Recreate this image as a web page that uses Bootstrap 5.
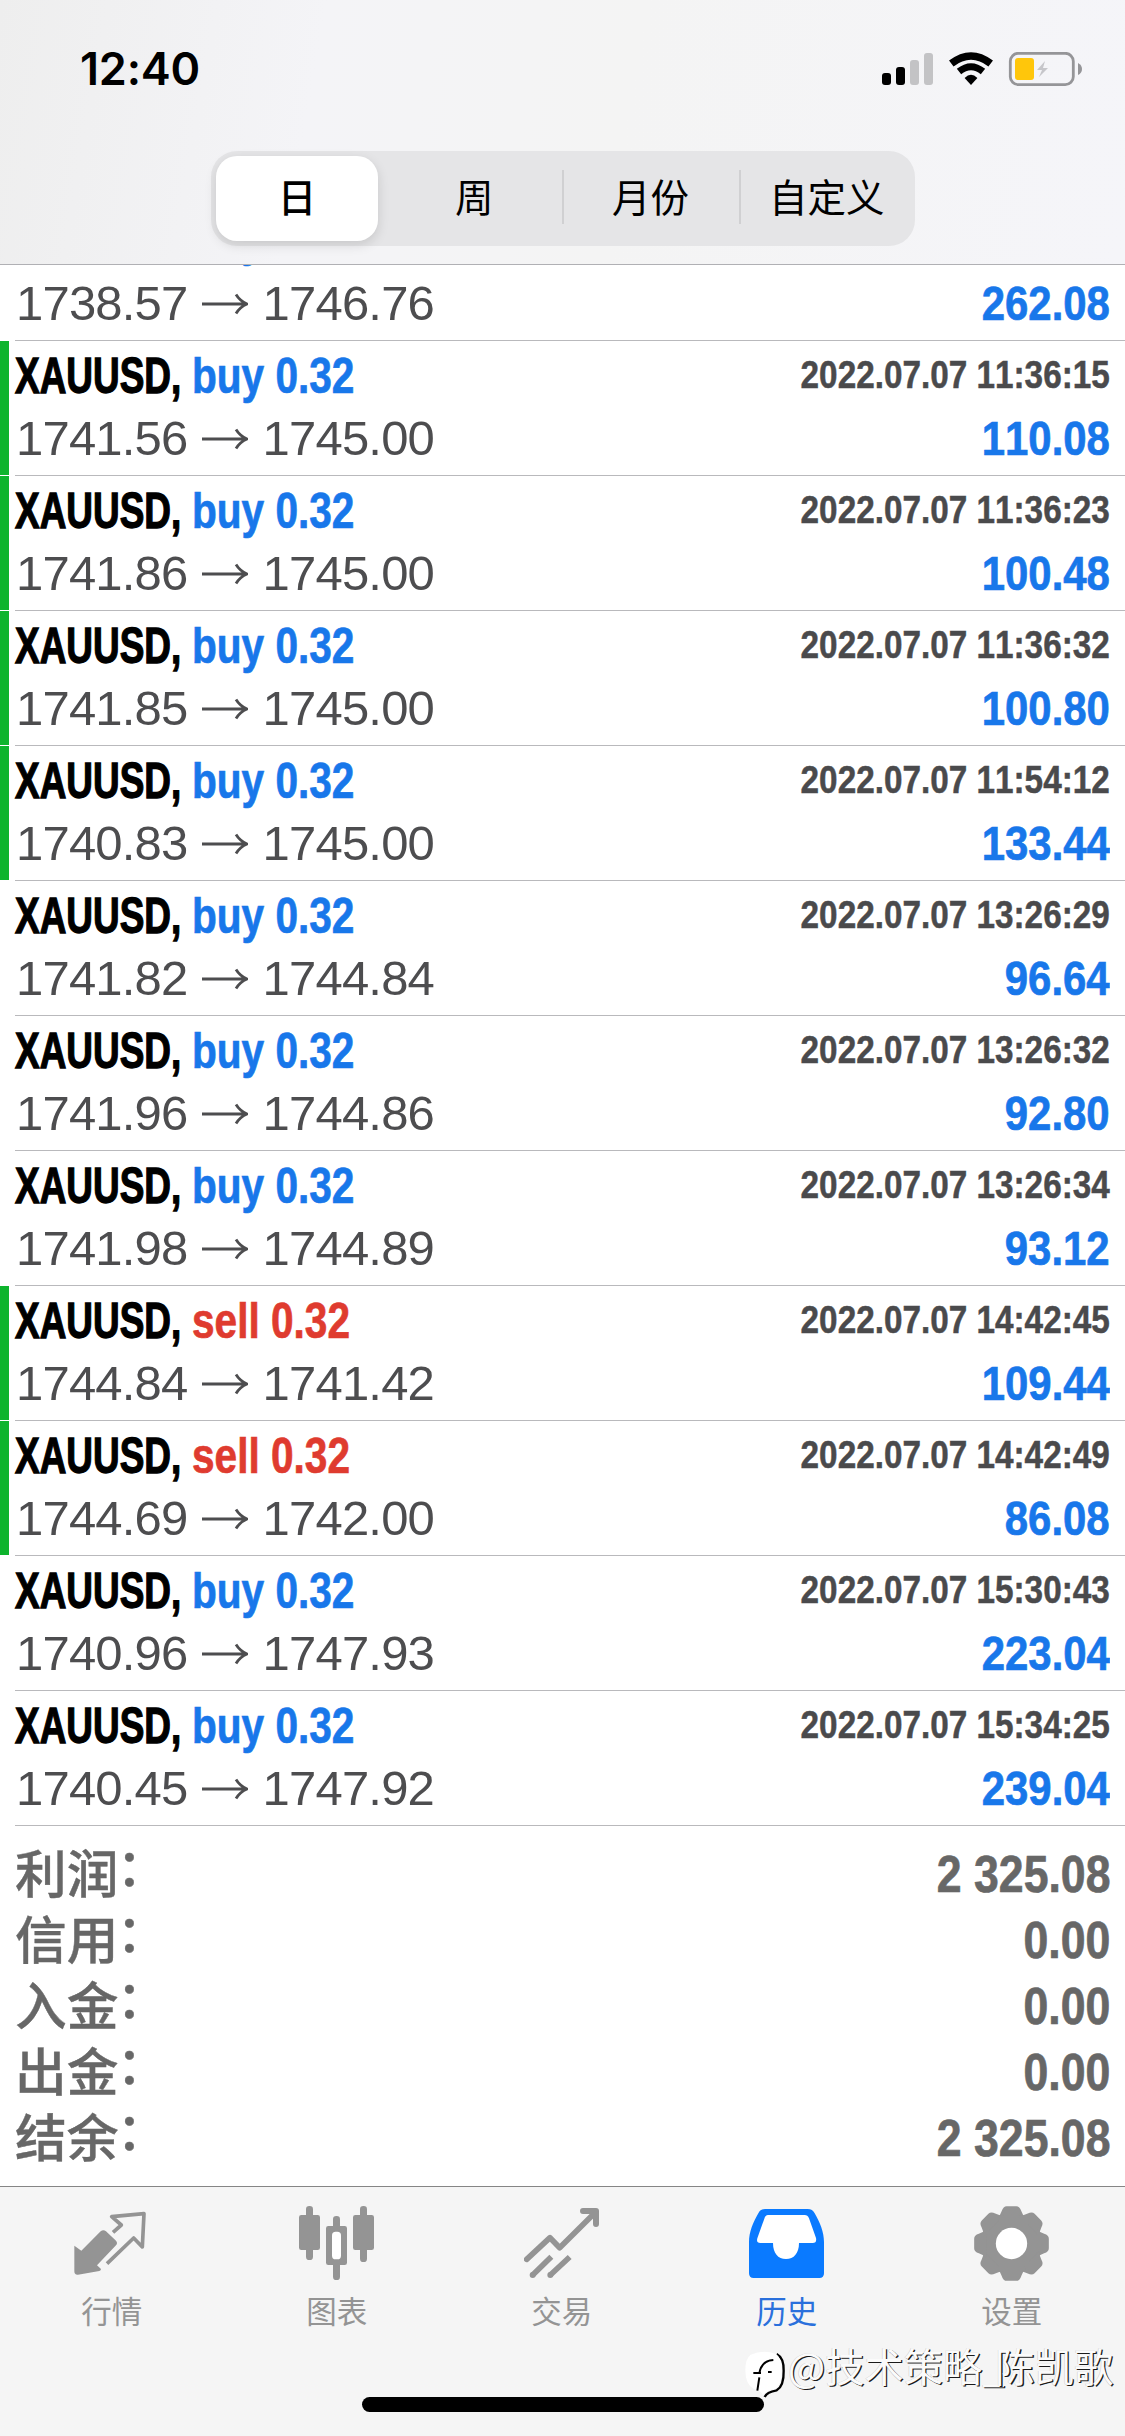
<!DOCTYPE html>
<html lang="zh-CN">
<head>
<meta charset="utf-8">
<meta name="viewport" content="width=device-width, initial-scale=1">
<title>历史</title>
<link href="https://cdn.jsdelivr.net/npm/bootstrap@5.3.0/dist/css/bootstrap.min.css" rel="stylesheet">
<style>
body{width:1125px;height:2436px;overflow:hidden;background:#fff;font-family:"Liberation Sans","Noto Sans CJK SC",sans-serif;font-kerning:none}
.top-area{height:264px;z-index:2;background:linear-gradient(100deg,#eee 0,#f4f4f7 28%,#f4f4f4 55%,#f5f5f9 100%)}
.top-area::after{content:"";position:absolute;left:0;right:0;bottom:-1px;height:1px;background:#b0b0b4}
.status-row{height:151px;padding:52px 43px 0 80px}
.clock{font:600 45px/34px Inter,sans-serif;letter-spacing:-.2px}
.segments{width:704px;height:95px;padding:5px 0 5px 5px;border-radius:26px;background:#e5e5e7;margin-left:211px;font-family:"Noto Sans CJK SC",sans-serif;font-size:38.5px;line-height:79px;color:#000}
.segments>div{flex:1 1 0;text-align:center;position:relative}
.segments .chosen{background:#fff;border-radius:21px;height:85px;flex:0 0 162px;margin-right:8px;font-weight:500;box-shadow:0 4px 12px rgba(0,0,0,.13)}
.segments .divided::before{content:"";position:absolute;left:0;top:14px;width:2px;height:54px;background:#d0d0d2}
.deals{height:1561px;display:flex;flex-direction:column;justify-content:flex-end;overflow:hidden;margin-top:1px}
.deal{height:135px;flex:none;padding-right:15px;line-height:63px;position:relative;border-left:9px solid transparent;background:#fff;background-clip:padding-box}
.deal.closed-tp{border-left-color:#0eb42d}
.deal::after{content:"";position:absolute;left:6px;right:0;bottom:0;height:1px;background:#b9b9bc}
.deal::before{content:"";position:absolute;left:-9px;width:9px;bottom:0;height:1px;background:#fff}
.upper,.lower{padding-left:6px;height:63px}
.upper{height:66px;padding-top:3px}
.deal:first-child .upper{padding-top:1px}
.sym,.side,.stamp,.gain,.sum{display:block;white-space:nowrap;font-weight:700;transform-origin:0 50%;-webkit-text-stroke:.7px currentColor}
.sym{width:176.5px;font-size:49.5px;color:#000;transform:scaleX(.746);-webkit-text-stroke-width:1.3px}
.side{font-size:49.5px;transform:scaleX(.82)}
.is-buy,.gain{color:#1877ea}
.is-sell{color:#df3b2f}
.stamp,.gain,.sum{margin-left:auto;transform-origin:100% 50%}
.stamp{font-size:39.5px;color:#4a4a4c;transform:scaleX(.843);line-height:61px;-webkit-text-stroke-width:.5px}
.gain{font-size:49px;transform:scaleX(.855)}
.quote-pair{font-size:49px;color:#4d4d4f;letter-spacing:-.8px;padding-left:1px}
.quote-pair svg{width:46px;height:22px;margin:0 15px 0 14px}
.totals{height:360px;padding:15px 15px 0;color:#676767}
.total-line{height:66px;line-height:66px}
.total-line b{font:500 51.7px/60px "Noto Sans CJK SC",sans-serif;-webkit-text-stroke:.4px currentColor}
.total-line b i{display:inline-block;font-style:normal;transform:translate(-2px,-7px)}
.sum{font-size:51.5px;transform:scaleX(.866)}
.tabs-area{height:250px;background:#f5f5f5;border-top:1px solid #858585;color:#949494;position:relative}
.tab-item{width:225px;padding:19px 1.5px 0 0}
.tab-item svg{width:75px;height:75px}
.tab-item span{font:400 30.5px/44px "Noto Sans CJK SC",sans-serif;margin-top:7px}
.tab-item.current{color:#0a7aff}
.tab-item.current span{color:#2a70dc}
.home-bar{position:absolute;left:362px;top:210px;width:402px;height:15px;border-radius:8px;background:#000}
.author-mark{position:absolute;left:744px;top:163px;height:48px}
.author-mark span{font:400 39.3px/46px "Noto Sans CJK SC",sans-serif;color:#fbfbfb;text-shadow:1.3px 1.3px 0 #1a1a1a,-.4px -.4px 0 #ccc;white-space:nowrap;margin:0 0 18px 1px}
.author-mark i{font-style:normal;letter-spacing:-9px}
</style>
</head>
<body>
<header class="top-area position-relative">
  <div class="status-row d-flex justify-content-between align-items-start">
    <div class="clock text-black">12:40</div>
    <svg width="202" height="36" viewBox="880 52 202 36">
      <rect x="882" y="73" width="9" height="12" rx="3"/><rect x="896" y="67" width="9" height="18" rx="3"/>
      <rect x="910" y="60" width="9" height="25" rx="3" fill="#c3c3c5"/><rect x="924" y="53" width="9" height="32" rx="3" fill="#c3c3c5"/>
      <g fill="none" stroke="#000" stroke-width="7.500"><path d="M951.300 63.500Q971 48.500 990.700 63.500"/><path d="M959 71.500Q971 62 983 71.500" stroke-width="7"/></g>
      <path d="M964.600 78Q971 71.500 977.400 78L971 85Z"/>
      <rect x="1010.300" y="53.300" width="63" height="31.400" rx="8" fill="none" stroke="#959598" stroke-width="2.800"/>
      <rect x="1015" y="58" width="19" height="22" rx="3" fill="#ffc60b"/>
      <path d="M1045 61L1037 70H1042L1039 77L1048 68H1043Z" fill="#c6c6ca"/>
      <path d="M1078 63Q1082 65 1082 69T1078 75Z" fill="#959598"/>
    </svg>
  </div>
  <div class="segments d-flex">
    <div class="chosen">日</div><div>周</div><div class="divided">月份</div><div class="divided">自定义</div>
  </div>
</header>

<main>
  <section class="deals" id="deals"></section>
  <section class="totals" id="totals"></section>
</main>

<footer class="tabs-area">
  <nav class="d-flex">
    <div class="tab-item d-flex flex-column align-items-center">
      <svg viewBox="0 0 225 225" fill="currentColor"><path d="M1 119L22 134L80 76Q88 69 96 76L126 104Q132 111 126 118L69 178L81 189Q81 193 76 195L12 206Q1 207 1 196Z"/><path d="M117 79L142 57L113 32L210 23L205 123L179 96L99 173" fill="none" stroke="currentColor" stroke-width="11" stroke-linejoin="round"/></svg>
      <span>行情</span></div>
    <div class="tab-item d-flex flex-column align-items-center">
      <svg viewBox="0 0 225 225" fill="currentColor"><rect y="27" width="63" height="105" rx="7"/><rect x="21" width="21" height="162" rx="10"/><rect x="81" y="60" width="63" height="117" rx="7"/><rect x="102" y="30" width="21" height="192" rx="10"/><rect x="99" y="77" width="27" height="83" rx="11" fill="#fff"/><rect x="162" y="27" width="63" height="105" rx="7"/><rect x="183" width="21" height="168" rx="10"/></svg>
      <span>图表</span></div>
    <div class="tab-item d-flex flex-column align-items-center">
      <svg viewBox="0 0 225 225" fill="none" stroke="currentColor" stroke-width="17"><path d="M8 160L78 95L107 125L215 18" stroke-linejoin="round" stroke-linecap="round"/><path d="M177 15H216V54" stroke-linecap="round" stroke-linejoin="round" stroke-width="18"/><path d="M26 207L82 152M79 207L137 153"/><g fill="currentColor" stroke="none"><circle cx="26" cy="207" r="9"/><circle cx="79" cy="207" r="9"/></g></svg>
      <span>交易</span></div>
    <div class="tab-item current d-flex flex-column align-items-center">
      <svg viewBox="0 0 225 225" fill="currentColor"><path d="M48 9H176Q191 9 197 22C213 50 225 78 225 108V202Q225 216 211 216H14Q0 216 0 202V108C0 78 12 50 28 22Q34 9 48 9Z"/><path d="M57 27H167Q176 27 180 37L201 96Q204 111 191 111H150C150 142 135 159 111 159S72 142 72 111H34Q21 111 25 97L46 38Q49 27 57 27Z" fill="#fff"/></svg>
      <span>历史</span></div>
    <div class="tab-item d-flex flex-column align-items-center">
      <svg viewBox="-112.500 -112.500 225 225" fill="currentColor"><defs><path id="tooth" d="M-42-76Q-33-86-29-98Q-25-112-14-112H14Q25-112 29-98Q33-86 42-76Z"/></defs><circle r="88"/><use href="#tooth"/><use href="#tooth" transform="rotate(45)"/><use href="#tooth" transform="rotate(90)"/><use href="#tooth" transform="rotate(135)"/><use href="#tooth" transform="rotate(180)"/><use href="#tooth" transform="rotate(225)"/><use href="#tooth" transform="rotate(270)"/><use href="#tooth" transform="rotate(315)"/><circle r="47" fill="#fff"/></svg>
      <span>设置</span></div>
  </nav>
  <div class="home-bar"></div>
  <div class="author-mark d-flex align-items-center">
    <svg width="43" height="48" viewBox="0 0 129 144"><path d="M98 12Q120 24 119 62Q120 108 98 121Q68 126 62 141" fill="none" stroke="#000" stroke-width="7"/><path d="M20 14Q58 -2 96 12Q114 24 113 60Q114 104 94 117Q68 120 57 136Q54 124 30 117Q4 104 4 60Q4 26 20 14Z" fill="#fff"/><path d="M40 122L46 82M28 69H51M46 70Q52 32 88 30M72 66H83" fill="none" stroke="#000" stroke-width="6"/></svg>
    <span>@技术策略<i>_</i>陈凯歌</span>
  </div>
</footer>

<script src="https://cdn.jsdelivr.net/npm/bootstrap@5.3.0/dist/js/bootstrap.bundle.min.js"></script>
<script>
// side, open, close, time, profit, closed by take-profit
const deals = [
  ['buy','1738.57','1746.76','','262.08',0],
  ['buy','1741.56','1745.00','11:36:15','110.08',1],
  ['buy','1741.86','1745.00','11:36:23','100.48',1],
  ['buy','1741.85','1745.00','11:36:32','100.80',1],
  ['buy','1740.83','1745.00','11:54:12','133.44',1],
  ['buy','1741.82','1744.84','13:26:29','96.64',0],
  ['buy','1741.96','1744.86','13:26:32','92.80',0],
  ['buy','1741.98','1744.89','13:26:34','93.12',0],
  ['sell','1744.84','1741.42','14:42:45','109.44',1],
  ['sell','1744.69','1742.00','14:42:49','86.08',1],
  ['buy','1740.96','1747.93','15:30:43','223.04',0],
  ['buy','1740.45','1747.92','15:34:25','239.04',0]
];
const arrow = '<svg viewBox="0 0 46 22" fill="none" stroke="currentColor" stroke-width="2.8"><path d="M0 11H44M34 1.500Q38 8 45 11Q38 14 34 20.500"/></svg>';
document.getElementById('deals').innerHTML = deals.map(([side,open,close,time,gain,tp]) => `
  <article class="deal${tp ? ' closed-tp' : ''}">
    <div class="upper d-flex"><span class="sym">XAUUSD,</span><span class="side is-${side}">${side} 0.32</span>${time ? `<span class="stamp">2022.07.07 ${time}</span>` : ''}</div>
    <div class="lower d-flex"><div class="quote-pair d-flex align-items-center">${open}${arrow}${close}</div><span class="gain">${gain}</span></div>
  </article>`).join('');
document.getElementById('totals').innerHTML = [['利润','2 325.08'],['信用','0.00'],['入金','0.00'],['出金','0.00'],['结余','2 325.08']]
  .map(([k,v]) => `<div class="total-line d-flex"><b>${k}<i>：</i></b><span class="sum">${v}</span></div>`).join('');
</script>
</body>
</html>
